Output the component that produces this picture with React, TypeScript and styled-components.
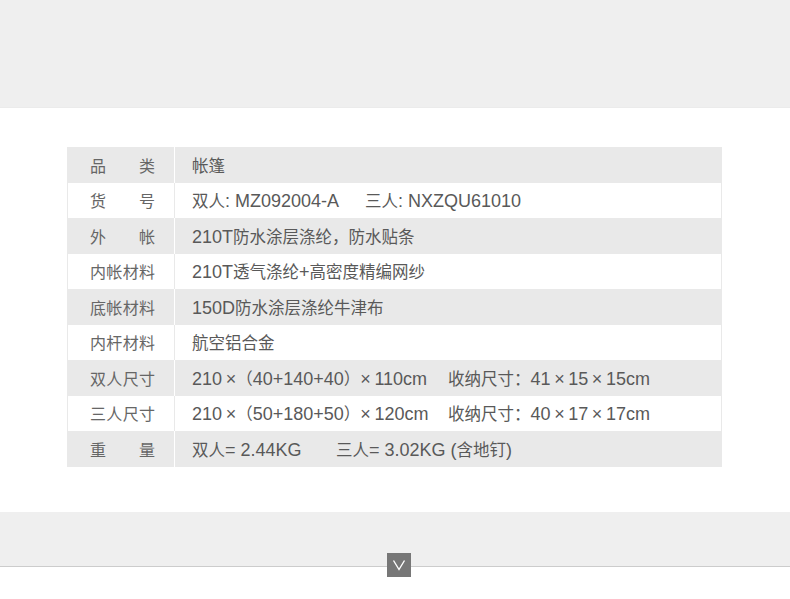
import React from 'react'
import styled, { createGlobalStyle } from 'styled-components'

const GlobalStyle = createGlobalStyle`
  html, body {
    margin: 0;
    padding: 0;
    background: #ffffff;
  }
  body {
    font-family: "Liberation Sans", "Noto Sans CJK SC", sans-serif;
  }
`

const Page = styled.div`
  width: 790px;
  height: 599px;
  overflow: hidden;
  display: flex;
  flex-direction: column;
`

const TopBand = styled.div`
  height: 107px;
  background: #efefef;
  border-bottom: 1px solid #ebebeb;
`

const TableWrap = styled.div`
  padding: 39px 68px 0 67px;
  height: 365px;
  box-sizing: border-box;
`

const Table = styled.div`
  display: flex;
  flex-direction: column;
  width: 655px;
`

const Row = styled.div<{ $shaded: boolean }>`
  display: flex;
  height: 35.5px;
  align-items: stretch;
  background: ${(p) => (p.$shaded ? '#e9e9e9' : '#ffffff')};
  border-left: 1px solid #e9e9e9;
  border-right: 1px solid #e9e9e9;
  box-sizing: border-box;
`

const LabelCell = styled.div<{ $shaded: boolean }>`
  width: 107px;
  flex-shrink: 0;
  display: flex;
  align-items: center;
  padding-left: 22px;
  box-sizing: border-box;
  border-right: 1px solid ${(p) => (p.$shaded ? '#ffffff' : '#e9e9e9')};
`

const Label = styled.span`
  display: block;
  width: 65px;
  font-family: "Noto Sans CJK SC", sans-serif;
  font-size: 16px;
  color: #666666;
  text-align: justify;
  text-align-last: justify;
`

const ValueCell = styled.div`
  display: flex;
  align-items: center;
  padding-left: 17px;
  font-family: "Noto Sans CJK SC", sans-serif;
  font-size: 16.5px;
  color: #595959;
  white-space: pre;
`

const Latin = styled.span`
  font-family: "Liberation Sans", Arial, sans-serif;
  font-size: 18px;
`

const Part = styled.span<{ $w?: number }>`
  display: inline-block;
  min-width: ${(p) => (p.$w ? `${p.$w}px` : 'auto')};
`

const BottomBand = styled.div`
  position: relative;
  margin-top: 39px;
  height: 54px;
  background: #efefef;
  border-bottom: 1px solid #cccccc;
`

const ArrowBox = styled.div`
  position: absolute;
  left: 387px;
  top: 41px;
  width: 24px;
  height: 24px;
  background: #777777;
  display: flex;
  align-items: center;
  justify-content: center;
`

// latin runs are drawn a bit bigger than the chinese ones, like the original
function Mixed({ text }: { text: string }) {
  const parts = text.split(/([\x20-\x7E×\u2009]+)/).filter(Boolean)
  return (
    <>
      {parts.map((p, i) =>
        /^[\x20-\x7E×\u2009]+$/.test(p) ? <Latin key={i}>{p}</Latin> : <React.Fragment key={i}>{p}</React.Fragment>
      )}
    </>
  )
}

type Spec = { label: string; value: string[]; widths?: number[] }

const T = '\u2009'

const specs: Spec[] = [
  { label: '品类', value: ['帐篷'] },
  { label: '货号', value: ['双人: MZ092004-A', '三人: NXZQU61010'], widths: [173] },
  { label: '外帐', value: ['210T防水涂层涤纶，防水贴条'] },
  { label: '内帐材料', value: ['210T透气涤纶+高密度精编网纱'] },
  { label: '底帐材料', value: ['150D防水涂层涤纶牛津布'] },
  { label: '内杆材料', value: ['航空铝合金'] },
  {
    label: '双人尺寸',
    value: [`210${T}×（40+140+40）×${T}110cm`, `收纳尺寸：41${T}×${T}15${T}×${T}15cm`],
    widths: [256],
  },
  {
    label: '三人尺寸',
    value: [`210${T}×（50+180+50）×${T}120cm`, `收纳尺寸：40${T}×${T}17${T}×${T}17cm`],
    widths: [256],
  },
  { label: '重量', value: ['双人= 2.44KG', '三人= 3.02KG (含地钉)'], widths: [144] },
]

export default function App() {
  return (
    <Page>
      <GlobalStyle />
      <TopBand />
      <TableWrap>
        <Table>
          {specs.map((s, i) => (
            <Row key={s.label} $shaded={i % 2 === 0}>
              <LabelCell $shaded={i % 2 === 0}>
                <Label>{s.label}</Label>
              </LabelCell>
              <ValueCell>
                {s.value.map((v, j) => (
                  <Part key={j} $w={s.widths?.[j]}>
                    <Mixed text={v} />
                  </Part>
                ))}
              </ValueCell>
            </Row>
          ))}
        </Table>
      </TableWrap>
      <BottomBand>
        <ArrowBox>
          <svg width="14" height="12" viewBox="0 0 14 12">
            <path d="M1.5 1.5 L7 10.5 L12.5 1.5" fill="none" stroke="#ffffff" strokeWidth="1.4" />
          </svg>
        </ArrowBox>
      </BottomBand>
    </Page>
  )
}
